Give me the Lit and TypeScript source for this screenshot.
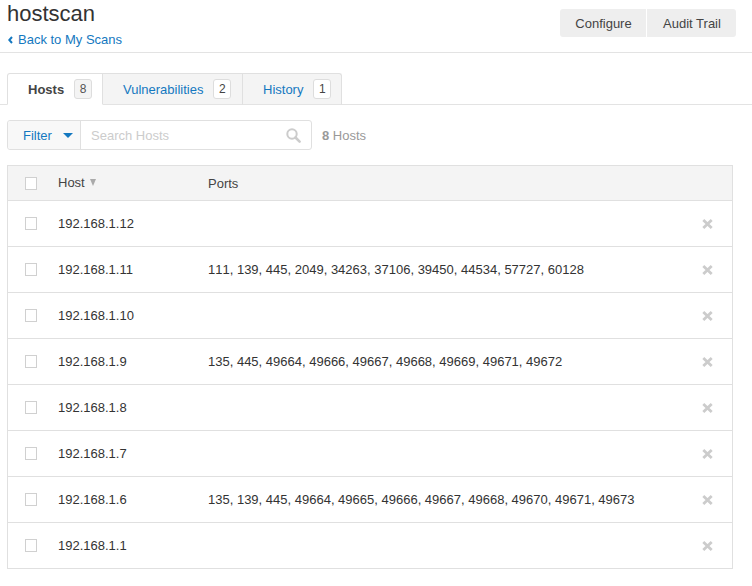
import { LitElement, html, css } from "lit";
import { customElement } from "lit/decorators.js";

const ROWS: [string, string][] = [
  ["192.168.1.12", ""],
  ["192.168.1.11", "111, 139, 445, 2049, 34263, 37106, 39450, 44534, 57727, 60128"],
  ["192.168.1.10", ""],
  ["192.168.1.9", "135, 445, 49664, 49666, 49667, 49668, 49669, 49671, 49672"],
  ["192.168.1.8", ""],
  ["192.168.1.7", ""],
  ["192.168.1.6", "135, 139, 445, 49664, 49665, 49666, 49667, 49668, 49670, 49671, 49673"],
  ["192.168.1.1", ""],
];

@customElement("app-root")
export class AppRoot extends LitElement {
  static styles = css`
    :host {
      display: block;
      width: 752px;
      height: 586px;
      overflow: hidden;
      background: #fff;
      font-family: "Liberation Sans", Arial, sans-serif;
      font-size: 13px;
      color: #333;
    }
    a { color: #1478c0; text-decoration: none; }
    .top {
      display: flex;
      justify-content: space-between;
      height: 52px;
      border-bottom: 1px solid #e3e3e3;
      padding: 0 16px 0 7px;
    }
    h1 {
      margin: 0;
      font-size: 22px;
      font-weight: 400;
      line-height: 26px;
      padding-top: 1px;
    }
    .back {
      display: flex;
      align-items: center;
      gap: 5px;
      margin-top: 5px;
      line-height: 15px;
      padding-left: 1px;
    }
    .actions { display: flex; gap: 1px; margin-top: 9px; height: 28px; }
    .actions button {
      border: 0;
      background: #eee;
      color: #444;
      font: inherit;
      padding: 0;
    }
    .actions .cfg { width: 86px; padding-left: 1px; border-radius: 3px 0 0 3px; }
    .actions .aud { width: 89px; padding-left: 1px; border-radius: 0 3px 3px 0; }
    .tabs {
      display: flex;
      align-items: flex-end;
      height: 31px;
      margin-top: 20px;
      padding-left: 7px;
      border-bottom: 1px solid #e3e3e3;
    }
    .tab {
      display: flex;
      align-items: center;
      gap: 10px;
      box-sizing: border-box;
      height: 32px;
      padding-left: 20px;
      margin-bottom: -1px;
      background: #f4f4f4;
      border: 1px solid #e0e0e0;
      border-left: 0;
      border-bottom-color: #e3e3e3;
    }
    .tab.hosts {
      width: 96px;
      background: #fff;
      border-left: 1px solid #e0e0e0;
      border-bottom-color: #fff;
      border-radius: 3px 0 0 0;
      font-weight: 700;
      color: #444;
    }
    .tab.vuln { width: 140px; }
    .tab.hist { width: 99px; border-radius: 0 3px 0 0; }
    .badge {
      display: flex;
      align-items: center;
      justify-content: center;
      box-sizing: border-box;
      width: 18px;
      height: 20px;
      border: 1px solid #ddd;
      border-radius: 3px;
      background: #fff;
      font-size: 12px;
      font-weight: 400;
      color: #444;
    }
    .tab.hosts .badge { background: #f4f4f4; color: #555; }
    .search-row {
      display: flex;
      align-items: center;
      margin: 15px 0 0 7px;
      height: 30px;
    }
    .search {
      display: flex;
      width: 305px;
      height: 30px;
      box-sizing: border-box;
      border: 1px solid #e0e0e0;
      border-radius: 3px;
    }
    .filter {
      display: flex;
      align-items: center;
      gap: 10px;
      box-sizing: border-box;
      width: 73px;
      padding-left: 15px;
      background: #f8f8f8;
      border-right: 1px solid #e0e0e0;
      color: #1478c0;
      border-radius: 3px 0 0 3px;
    }
    .caret {
      width: 0;
      height: 0;
      margin-left: 1px;
      border-left: 5px solid transparent;
      border-right: 5px solid transparent;
      border-top: 5px solid #1478c0;
    }
    .query {
      flex: 1;
      display: flex;
      align-items: center;
      justify-content: space-between;
      padding: 0 10px;
      color: #ccc;
    }
    .count { margin-left: 10px; color: #999; }
    .table {
      margin: 15px 0 0 7px;
      width: 726px;
      box-sizing: border-box;
      border: 1px solid #e0e0e0;
      border-bottom: 0;
    }
    .row {
      display: grid;
      grid-template-columns: 50px 150px 1fr 40px;
      align-items: center;
      height: 46px;
      box-sizing: border-box;
      border-bottom: 1px solid #e0e0e0;
    }
    .row.head {
      height: 35px;
      background: #f4f4f4;
      color: #444;
    }
    .box {
      width: 10px;
      height: 11px;
      margin-left: 17px;
      border: 1px solid #d0d0d0;
      background: #fff;
      margin-top: -1px;
    }
    .head .box { margin-top: 0; }
    .ports { font-kerning: none; }
    .head .host { display: flex; align-items: center; gap: 5px; margin-top: -2px; }
    .sort {
      width: 0;
      height: 0;
      border-left: 3.5px solid transparent;
      border-right: 3.5px solid transparent;
      border-top: 7px solid #aaa;
      margin-top: 1px;
    }
    .x { padding-left: 10px; }
    svg { display: block; }
  `;

  render() {
    return html`
      <div class="top">
        <div>
          <h1>hostscan</h1>
          <a class="back" href="#">
            <svg width="5" height="8" viewBox="0 0 5 8"><path d="M4 1 1.3 4 4 7" fill="none" stroke="#1478c0" stroke-width="2"/></svg>
            Back to My Scans
          </a>
        </div>
        <div class="actions">
          <button class="cfg">Configure</button>
          <button class="aud">Audit Trail</button>
        </div>
      </div>
      <div class="tabs">
        <div class="tab hosts">Hosts <span class="badge">8</span></div>
        <div class="tab vuln"><a href="#">Vulnerabilities</a> <span class="badge">2</span></div>
        <div class="tab hist"><a href="#">History</a> <span class="badge">1</span></div>
      </div>
      <div class="search-row">
        <div class="search">
          <div class="filter">Filter <span class="caret"></span></div>
          <div class="query">
            <span>Search Hosts</span>
            <svg width="15" height="15" viewBox="0 0 15 15"><circle cx="6" cy="6" r="4.7" fill="none" stroke="#ccc" stroke-width="2"/><path d="M9.5 9.5 13.6 13.6" stroke="#ccc" stroke-width="2.6" stroke-linecap="round"/></svg>
          </div>
        </div>
        <div class="count"><b>8</b> Hosts</div>
      </div>
      <div class="table">
        <div class="row head">
          <div class="box"></div>
          <div class="host">Host <span class="sort"></span></div>
          <div class="ports">Ports</div>
          <div></div>
        </div>
        ${ROWS.map(
          ([h, p]) => html`
            <div class="row">
              <div class="box"></div>
              <div class="host">${h}</div>
              <div class="ports">${p}</div>
              <div class="x">
                <svg width="11" height="10" viewBox="0 0 11 10"><path d="M1.3 1 9.7 9M9.7 1 1.3 9" stroke="#ccc" stroke-width="2.8"/></svg>
              </div>
            </div>
          `
        )}
      </div>
    `;
  }
}
